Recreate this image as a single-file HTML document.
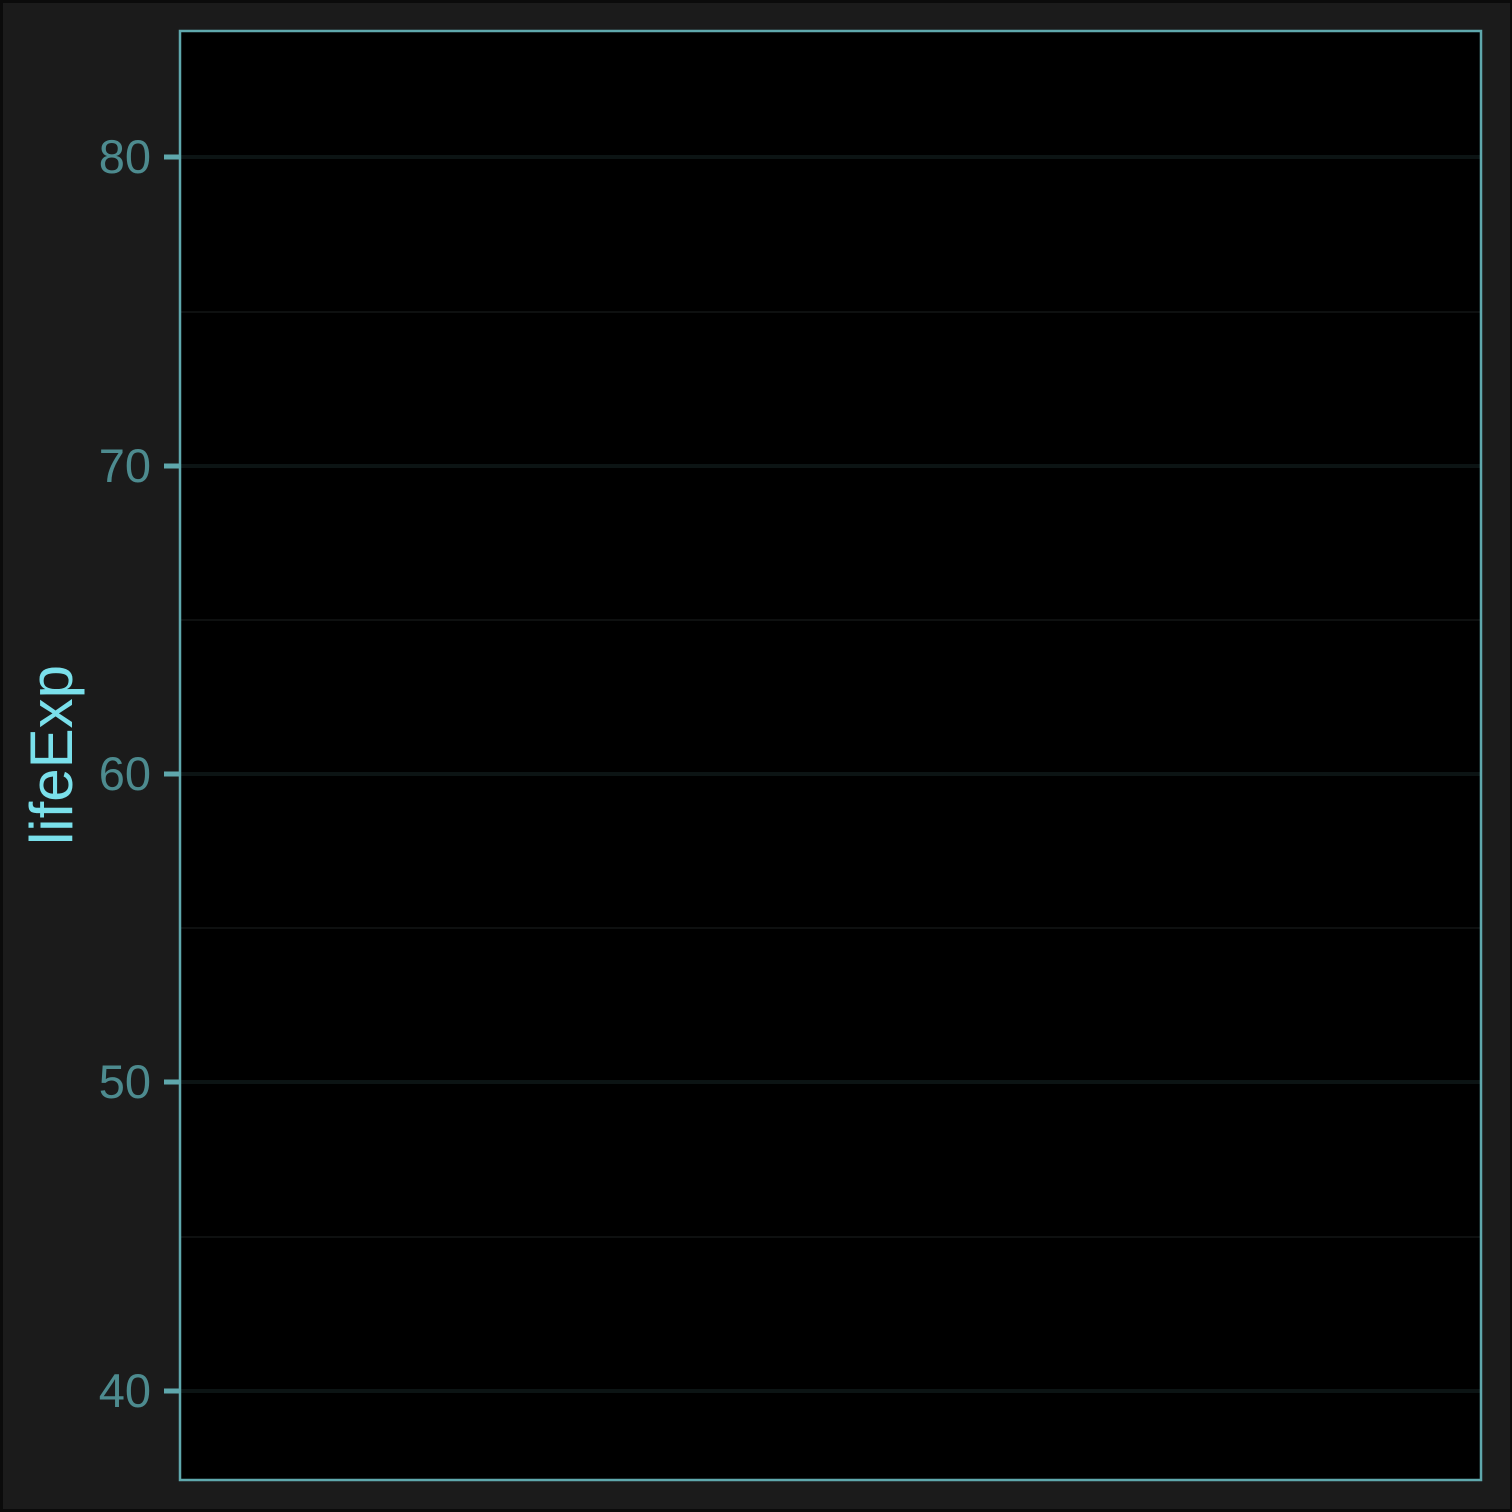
<!DOCTYPE html>
<html><head><style>
html,body{margin:0;padding:0;background:#0a0a0a;}
svg{display:block}
</style></head><body>
<svg width="1512" height="1512" xmlns="http://www.w3.org/2000/svg">
<rect x="0" y="0" width="1512" height="1512" fill="#0b0b0b"/>
<rect x="3" y="3" width="1507" height="1506" fill="#1b1b1b"/>
<rect x="180" y="31" width="1301" height="1449" fill="#000"/>
<g stroke="#0e1010" stroke-width="2">
<line x1="180" x2="1481" y1="312" y2="312"/>
<line x1="180" x2="1481" y1="620" y2="620"/>
<line x1="180" x2="1481" y1="928" y2="928"/>
<line x1="180" x2="1481" y1="1237" y2="1237"/>
</g>
<g stroke="#0c1414" stroke-width="4">
<line x1="180" x2="1481" y1="157" y2="157"/>
<line x1="180" x2="1481" y1="466" y2="466"/>
<line x1="180" x2="1481" y1="774" y2="774"/>
<line x1="180" x2="1481" y1="1082" y2="1082"/>
<line x1="180" x2="1481" y1="1391" y2="1391"/>
</g>
<rect x="180" y="31" width="1301" height="1449" fill="none" stroke="#5fa8ad" stroke-width="2.5"/>
<g stroke="#5fa8ad" stroke-width="5">
<line x1="164" x2="180" y1="157" y2="157"/>
<line x1="164" x2="180" y1="466" y2="466"/>
<line x1="164" x2="180" y1="774" y2="774"/>
<line x1="164" x2="180" y1="1082" y2="1082"/>
<line x1="164" x2="180" y1="1391" y2="1391"/>
</g>
<g fill="#4d8b8f" font-family="Liberation Sans, sans-serif" font-size="47" text-anchor="end">
<text x="151" y="173">80</text>
<text x="151" y="482">70</text>
<text x="151" y="790">60</text>
<text x="151" y="1098">50</text>
<text x="151" y="1407">40</text>
</g>
<text transform="translate(72,755) rotate(-90)" fill="#7ae0eb" font-family="Liberation Sans, sans-serif" font-size="60" text-anchor="middle">lifeExp</text>
</svg>
</body></html>
